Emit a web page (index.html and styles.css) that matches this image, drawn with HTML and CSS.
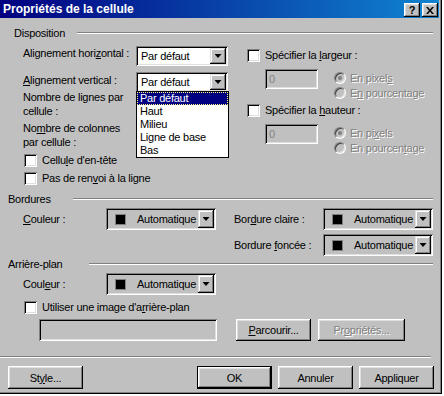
FILE: index.html
```html
<!DOCTYPE html>
<html lang="fr">
<head>
  <meta charset="UTF-8" />
  <title>Propriétés de la cellule</title>
  <link rel="stylesheet" href="styles.css">
</head>
<body>
  <div class="window">
    <div class="titlebar">
      <span class="title">Propriétés de la cellule</span>
      <span class="cap-btn help">?</span>
      <span class="cap-btn close">
        <svg width="8" height="7" viewBox="0 0 8 7"><path d="M0 0h2l2 2.5 2-2.5h2l-3 3.5 3 3.5h-2l-2-2.5-2 2.5h-2l3-3.5z" fill="#000"/></svg>
      </span>
    </div>

    <div class="content">
      <!-- Disposition -->
      <div class="group-head head-disp"><span class="cap">Disposition</span><i class="rule"></i></div>
      <div class="disp">
        <div class="col-left">
          <div class="row">
            <span class="lbl">Alignement hori<u>z</u>ontal :</span>
            <div class="combo"><span class="val">Par défaut</span><b class="drop"></b></div>
          </div>
          <div class="row row-2">
            <span class="lbl"><u>A</u>lignement vertical :</span>
            <div class="combo">
              <span class="val">Par défaut</span><b class="drop"></b>
              <ul class="list">
                <li class="sel">Par défaut</li>
                <li>Haut</li>
                <li>Milieu</li>
                <li>Ligne de base</li>
                <li>Bas</li>
              </ul>
            </div>
          </div>
          <div class="lbl2 first">Nombre de lignes par<br>cellule :</div>
          <div class="lbl2">No<u>m</u>bre de colonnes<br>par cellule :</div>
          <div class="check"><i class="box"></i><span>Cellu<u>l</u>e d'en-tête</span></div>
          <div class="check"><i class="box"></i><span>Pas de ren<u>v</u>oi à la ligne</span></div>
        </div>

        <div class="col-right">
          <div class="check"><i class="box"></i><span>Spécifier la <u>l</u>argeur :</span></div>
          <div class="size-row">
            <div class="edit">0</div>
            <div class="radios">
              <div class="radio"><i class="dot on"></i><span>En pixel<u>s</u></span></div>
              <div class="radio"><i class="dot"></i><span>E<u>n</u> pourcentage</span></div>
            </div>
          </div>
          <div class="check check-h"><i class="box"></i><span>Spécifier la <u>h</u>auteur :</span></div>
          <div class="size-row">
            <div class="edit">0</div>
            <div class="radios">
              <div class="radio"><i class="dot on"></i><span>En pi<u>x</u>els</span></div>
              <div class="radio"><i class="dot"></i><span>En pourcen<u>t</u>age</span></div>
            </div>
          </div>
        </div>
      </div>

      <!-- Bordures -->
      <div class="group-head head-bord"><span class="cap">Bordures</span><i class="rule"></i></div>
      <div class="bord">
        <div class="field">
          <span class="flbl"><u>C</u>ouleur :</span>
          <div class="ccombo"><i class="swatch"></i><span>Automatique</span><b class="drop"></b></div>
        </div>
        <div class="bord-right">
          <div class="field">
            <span class="flbl wide">Bor<u>d</u>ure claire :</span>
            <div class="ccombo"><i class="swatch"></i><span>Automatique</span><b class="drop"></b></div>
          </div>
          <div class="field">
            <span class="flbl wide">Bordure <u>f</u>oncée :</span>
            <div class="ccombo"><i class="swatch"></i><span>Automatique</span><b class="drop"></b></div>
          </div>
        </div>
      </div>

      <!-- Arrière-plan -->
      <div class="group-head head-bg"><span class="cap">Arrière-plan</span><i class="rule"></i></div>
      <div class="field bg-color">
        <span class="flbl">Coul<u>e</u>ur :</span>
        <div class="ccombo"><i class="swatch"></i><span>Automatique</span><b class="drop"></b></div>
      </div>
      <div class="check bg-check"><i class="box"></i><span>Utiliser une image d'a<u>r</u>rière-plan</span></div>
      <div class="image-row">
        <div class="edit path"></div>
        <span class="btn browse"><span><u>P</u>arcourir...</span></span>
        <span class="btn props disabled"><span>Pr<u>o</u>priétés...</span></span>
      </div>

      <div class="sep"></div>

      <div class="footer">
        <span class="btn"><span>St<u>y</u>le...</span></span>
        <span class="btn default">OK</span>
        <span class="btn">Annuler</span>
        <span class="btn">Appliquer</span>
      </div>
    </div>
  </div>
</body>
</html>
```

FILE: styles.css
```css
body {
  margin: 0;
  background: #fff;
  font-family: "Liberation Sans", Arial, sans-serif;
  font-size: 11px;
  color: #000;
}
u {
  text-decoration: underline;
  text-underline-offset: 1px;
}
.window {
  width: 442px;
  height: 394px;
  box-sizing: border-box;
  background: #c0c0c0;
  border-right: 1px solid #000;
  border-bottom: 1px solid #000;
  box-shadow: inset -1px -1px #808080;
  letter-spacing: -0.25px;
}

/* title bar */
.titlebar {
  width: 439px;
  height: 18px;
  display: flex;
  align-items: flex-start;
  background: linear-gradient(90deg, #000080, #1084d0);
}
.title {
  color: #fff;
  font-weight: bold;
  font-size: 12px;
  line-height: 18px;
  margin-left: 3px;
  letter-spacing: 0;
}
.cap-btn {
  width: 16px;
  height: 14px;
  margin-top: 3px;
  box-sizing: border-box;
  background: #c0c0c0;
  box-shadow: inset -1px -1px #000, inset 1px 1px #fff, inset -2px -2px #808080, inset 2px 2px #dfdfdf;
  display: flex;
  align-items: center;
  justify-content: center;
}
.help {
  margin-left: auto;
  font-weight: bold;
  font-size: 11px;
  line-height: 14px;
}
.close {
  margin-left: 2px;
  margin-right: 1px;
}

/* group headers */
.group-head {
  display: flex;
  align-items: center;
  height: 14px;
  margin-right: 8px;
}
.group-head .rule {
  flex: 1;
  height: 0;
  border-top: 1px solid #808080;
  border-bottom: 1px solid #fff;
}
.head-disp {
  margin-top: 8px;
  padding-left: 14px;
}
.head-disp .cap { width: 63px; }
.head-bord {
  margin-top: 7px;
  padding-left: 8px;
}
.head-bord .cap { width: 65px; }
.head-bg {
  margin-top: 1px;
  padding-left: 8px;
}
.head-bg .cap { width: 81px; }

/* disposition */
.disp {
  display: flex;
  margin-top: 6px;
}
.col-left {
  margin-left: 23px;
  width: 206px;
  display: flex;
  flex-direction: column;
}
.row {
  display: flex;
  height: 20px;
}
.row-2 { margin-top: 6px; }
.row-2 .lbl { padding-top: 1px; }
.lbl {
  width: 113px;
  line-height: 14px;
}
.lbl2 {
  line-height: 14px;
  margin-top: 3px;
}
.lbl2.first { margin-top: -2px; }

.combo {
  position: relative;
  width: 92px;
  height: 20px;
  box-sizing: border-box;
  padding: 2px;
  background: #fff;
  box-shadow: inset 1px 1px #808080, inset -1px -1px #fff, inset 2px 2px #000, inset -2px -2px #dfdfdf;
  display: flex;
  align-items: center;
}
.combo .val {
  padding-left: 3px;
}
.drop {
  margin-left: auto;
  width: 16px;
  height: 16px;
  flex: none;
  background: #c0c0c0;
  box-shadow: inset -1px -1px #000, inset 1px 1px #dfdfdf, inset -2px -2px #808080, inset 2px 2px #fff;
  display: flex;
  align-items: center;
  justify-content: center;
}
.drop::after {
  content: "";
  width: 7px;
  height: 4px;
  background: #000;
  clip-path: polygon(0 0, 100% 0, 50% 100%);
}
.list {
  position: absolute;
  left: 0;
  top: 19px;
  width: 93px;
  margin: 0;
  padding: 0;
  list-style: none;
  box-sizing: border-box;
  border: 1px solid #000;
  background: #fff;
  z-index: 2;
}
.list li {
  height: 13px;
  line-height: 13px;
  padding-left: 3px;
}
.list li.sel {
  background: #000080;
  color: #fff;
  outline: 1px dotted #ffff80;
  outline-offset: -1px;
}

.check {
  display: flex;
  align-items: center;
  height: 13px;
  line-height: 13px;
  margin-top: 5px;
  margin-left: 1px;
}
.box {
  width: 13px;
  height: 13px;
  flex: none;
  box-sizing: border-box;
  background: #fff;
  margin-right: 5px;
  box-shadow: inset 1px 1px #808080, inset -1px -1px #fff, inset 2px 2px #000, inset -2px -2px #dfdfdf;
}

.col-right {
  margin-left: 18px;
  padding-top: 3px;
}
.col-right .check {
  margin: 0;
}
.col-right .check-h {
  margin-top: 4px;
}
.size-row {
  display: flex;
  margin-top: 7px;
}
.edit {
  height: 20px;
  box-sizing: border-box;
  background: #c0c0c0;
  color: #808080;
  padding: 3px 0 0 4px;
  line-height: 14px;
  box-shadow: inset 1px 1px #808080, inset -1px -1px #fff, inset 2px 2px #000, inset -2px -2px #dfdfdf;
}
.size-row .edit {
  width: 53px;
  margin-left: 18px;
}
.radios {
  margin-left: 16px;
  padding-top: 1px;
}
.radio {
  display: flex;
  align-items: center;
  height: 15px;
  color: #808080;
  text-shadow: 1px 1px #fff;
}
.dot {
  width: 12px;
  height: 12px;
  box-sizing: border-box;
  border-radius: 50%;
  margin-right: 4px;
  background: #c0c0c0;
  border: 1px solid;
  border-color: #808080 #fff #fff #808080;
  box-shadow: inset 1px 1px #404040, inset -1px -1px #dfdfdf;
  display: flex;
  align-items: center;
  justify-content: center;
}
.dot.on::after {
  content: "";
  width: 4px;
  height: 4px;
  border-radius: 50%;
  background: #808080;
}

/* colour fields */
.bord {
  display: flex;
  align-items: flex-start;
  margin-top: 2px;
}
.field {
  display: flex;
  align-items: center;
  margin-left: 23px;
}
.flbl {
  width: 83px;
}
.flbl.wide {
  width: 89px;
}
.ccombo {
  width: 110px;
  height: 22px;
  box-sizing: border-box;
  padding: 2px;
  display: flex;
  align-items: center;
  background: #c0c0c0;
  box-shadow: inset 1px 1px #808080, inset -1px -1px #fff, inset 2px 2px #000, inset -2px -2px #dfdfdf;
}
.ccombo .swatch {
  width: 11px;
  height: 11px;
  box-sizing: border-box;
  border: 1px solid #808080;
  background: #000;
  margin: 0 11px 0 7px;
}
.ccombo .drop {
  height: 18px;
}
.bord-right {
  margin-left: -5px;
  display: flex;
  flex-direction: column;
  gap: 4px;
}
.bg-color {
  margin-top: 2px;
}
.bg-check {
  margin-top: 6px;
  margin-left: 24px;
}
.image-row {
  display: flex;
  margin-top: 5px;
}
.edit.path {
  width: 178px;
  height: 22px;
  margin-left: 39px;
}

/* buttons */
.btn {
  height: 22px;
  box-sizing: border-box;
  display: flex;
  align-items: center;
  justify-content: center;
  background: #c0c0c0;
  box-shadow: inset -1px -1px #000, inset 1px 1px #fff, inset -2px -2px #808080, inset 2px 2px #dfdfdf;
}
.browse {
  width: 75px;
  margin-left: 19px;
}
.props {
  width: 87px;
  margin-left: 7px;
}
.btn.disabled {
  color: #808080;
  text-shadow: 1px 1px #fff;
}
.sep {
  width: 431px;
  height: 0;
  margin-top: 15px;
  border-top: 1px solid #808080;
  border-bottom: 1px solid #fff;
}
.footer {
  display: flex;
  margin-top: 8px;
  padding-left: 8px;
}
.footer .btn {
  width: 75px;
  height: 23px;
  margin-left: 6px;
}
.footer .btn:first-child {
  margin-left: 0;
  margin-right: 108px;
}
.footer .default {
  border: 1px solid #000;
}
```
